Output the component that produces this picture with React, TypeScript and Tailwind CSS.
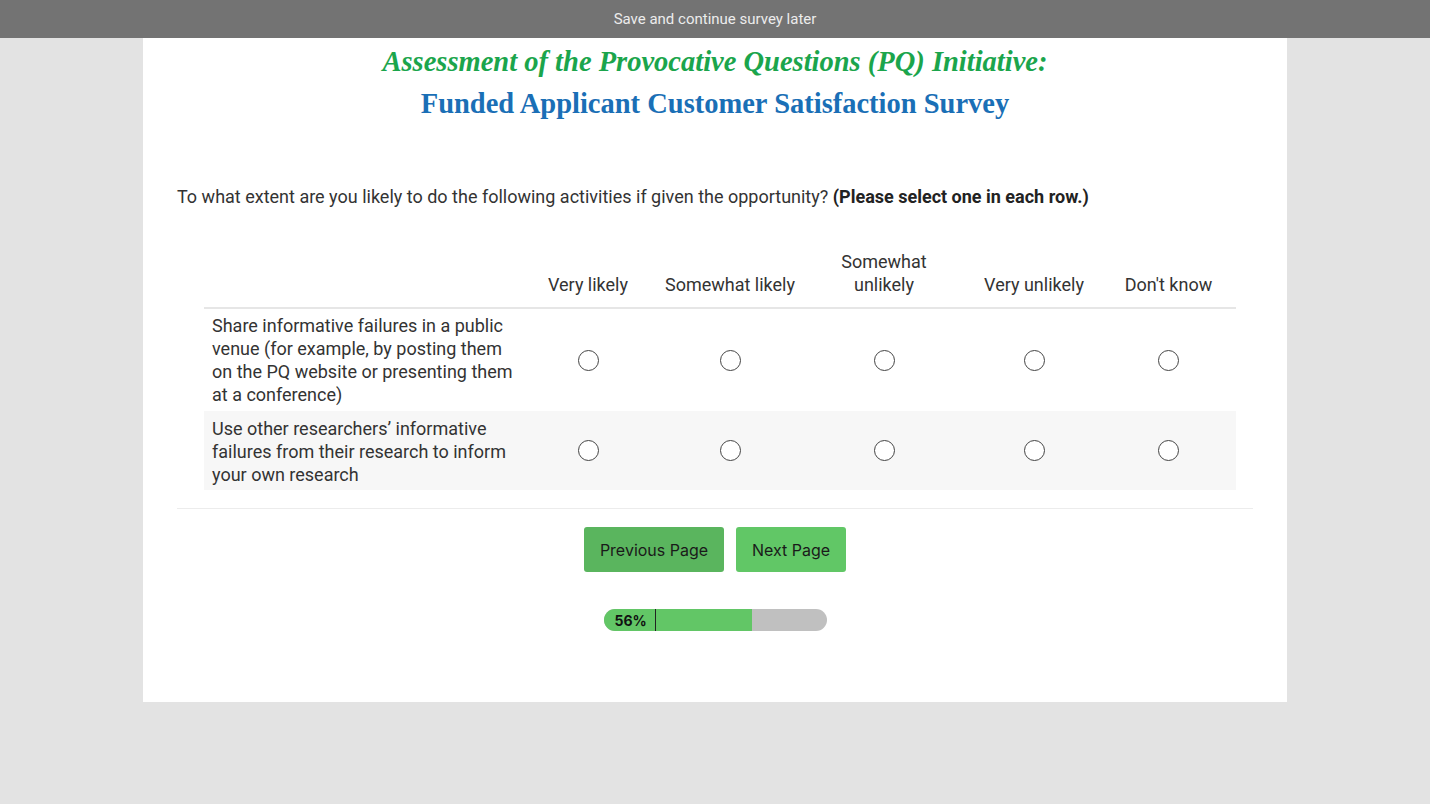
import React from 'react';

const columns = ['Very likely', 'Somewhat likely', 'Somewhat unlikely', 'Very unlikely', "Don't know"];

const rows = [
  'Share informative failures in a public venue (for example, by posting them on the PQ website or presenting them at a conference)',
  'Use other researchers\u2019 informative failures from their research to inform your own research',
];

// Radio button circle
const Radio: React.FC = () => (
  <span className="inline-block w-[21px] h-[21px] rounded-full border-[1.5px] border-[#444] bg-white" />
);

const App: React.FC = () => {
  return (
    <div className="min-h-[804px] bg-[#e3e3e3] font-['Roboto',sans-serif] text-[#333]">
      {/* Top bar */}
      <div className="h-[38px] bg-[#737373] flex items-center justify-center text-[15px] text-[#ececec]">
        Save and continue survey later
      </div>

      <div className="mx-auto w-[1144px] bg-white h-[664px] px-[34px]">
        {/* Title */}
        <div className="text-center font-['Liberation_Serif',serif] font-bold text-[28.5px] leading-[42px] pt-[3px]">
          <div className="italic text-[#1ba54c]">Assessment of the Provocative Questions (PQ) Initiative:</div>
          <div className="text-[#1a6fb6]">Funded Applicant Customer Satisfaction Survey</div>
        </div>

        {/* Question */}
        <p className="mt-[60px] text-[18px] leading-[24px] text-[#333]">
          To what extent are you likely to do the following activities if given the opportunity?{' '}
          <span className="font-bold text-[#222]"> (Please select one in each row.)</span>
        </p>

        {/* Matrix */}
        <div className="mt-[41px] mx-[27px] grid grid-cols-[313px_142px_142px_166px_134px_135px] text-[18px] leading-[23px]">
          <div className="border-b-2 border-[#e6e6e6]" />
          {columns.map((c) => (
            <div
              key={c}
              className="flex items-end justify-center text-center px-1 pb-[11px] border-b-2 border-[#e6e6e6]"
            >
              <span className="max-w-[140px]">{c}</span>
            </div>
          ))}
          {rows.map((r, i) => (
            <React.Fragment key={r}>
              <div className={`pl-2 py-[5px] ${i % 2 === 1 ? 'bg-[#f7f7f7] pb-[4px] pt-[6px]' : ''}`}>{r}</div>
              {columns.map((c) => (
                <div
                  key={c}
                  className={`flex items-center justify-center ${i % 2 === 1 ? 'bg-[#f7f7f7]' : ''}`}
                >
                  <Radio />
                </div>
              ))}
            </React.Fragment>
          ))}
        </div>

        <div className="mt-[18px] border-t border-[#ececec]" />

        {/* Buttons */}
        <div className="mt-[18px] flex justify-center gap-3 font-['Inter',sans-serif] text-[16px] text-[#1a1a1a]">
          <button className="w-[140px] h-[45px] rounded-[3px] bg-[#5ab55e]">Previous Page</button>
          <button className="w-[110px] h-[45px] rounded-[3px] bg-[#61c766]">Next Page</button>
        </div>

        {/* Progress */}
        <div className="mt-[37px] flex justify-center">
          <div className="relative w-[223px] h-[22px] rounded-full bg-[#c0c0c0] overflow-hidden">
            <div className="h-full w-[148px] bg-[#62c666]" />
            <span className="absolute left-[11px] top-0 h-full flex items-center font-['Inter',sans-serif] font-bold text-[14px] text-[#111]">
              56%
            </span>
            <span className="absolute left-[51px] top-0 h-full w-px bg-[#222]" />
          </div>
        </div>
      </div>
    </div>
  );
};

export default App;
